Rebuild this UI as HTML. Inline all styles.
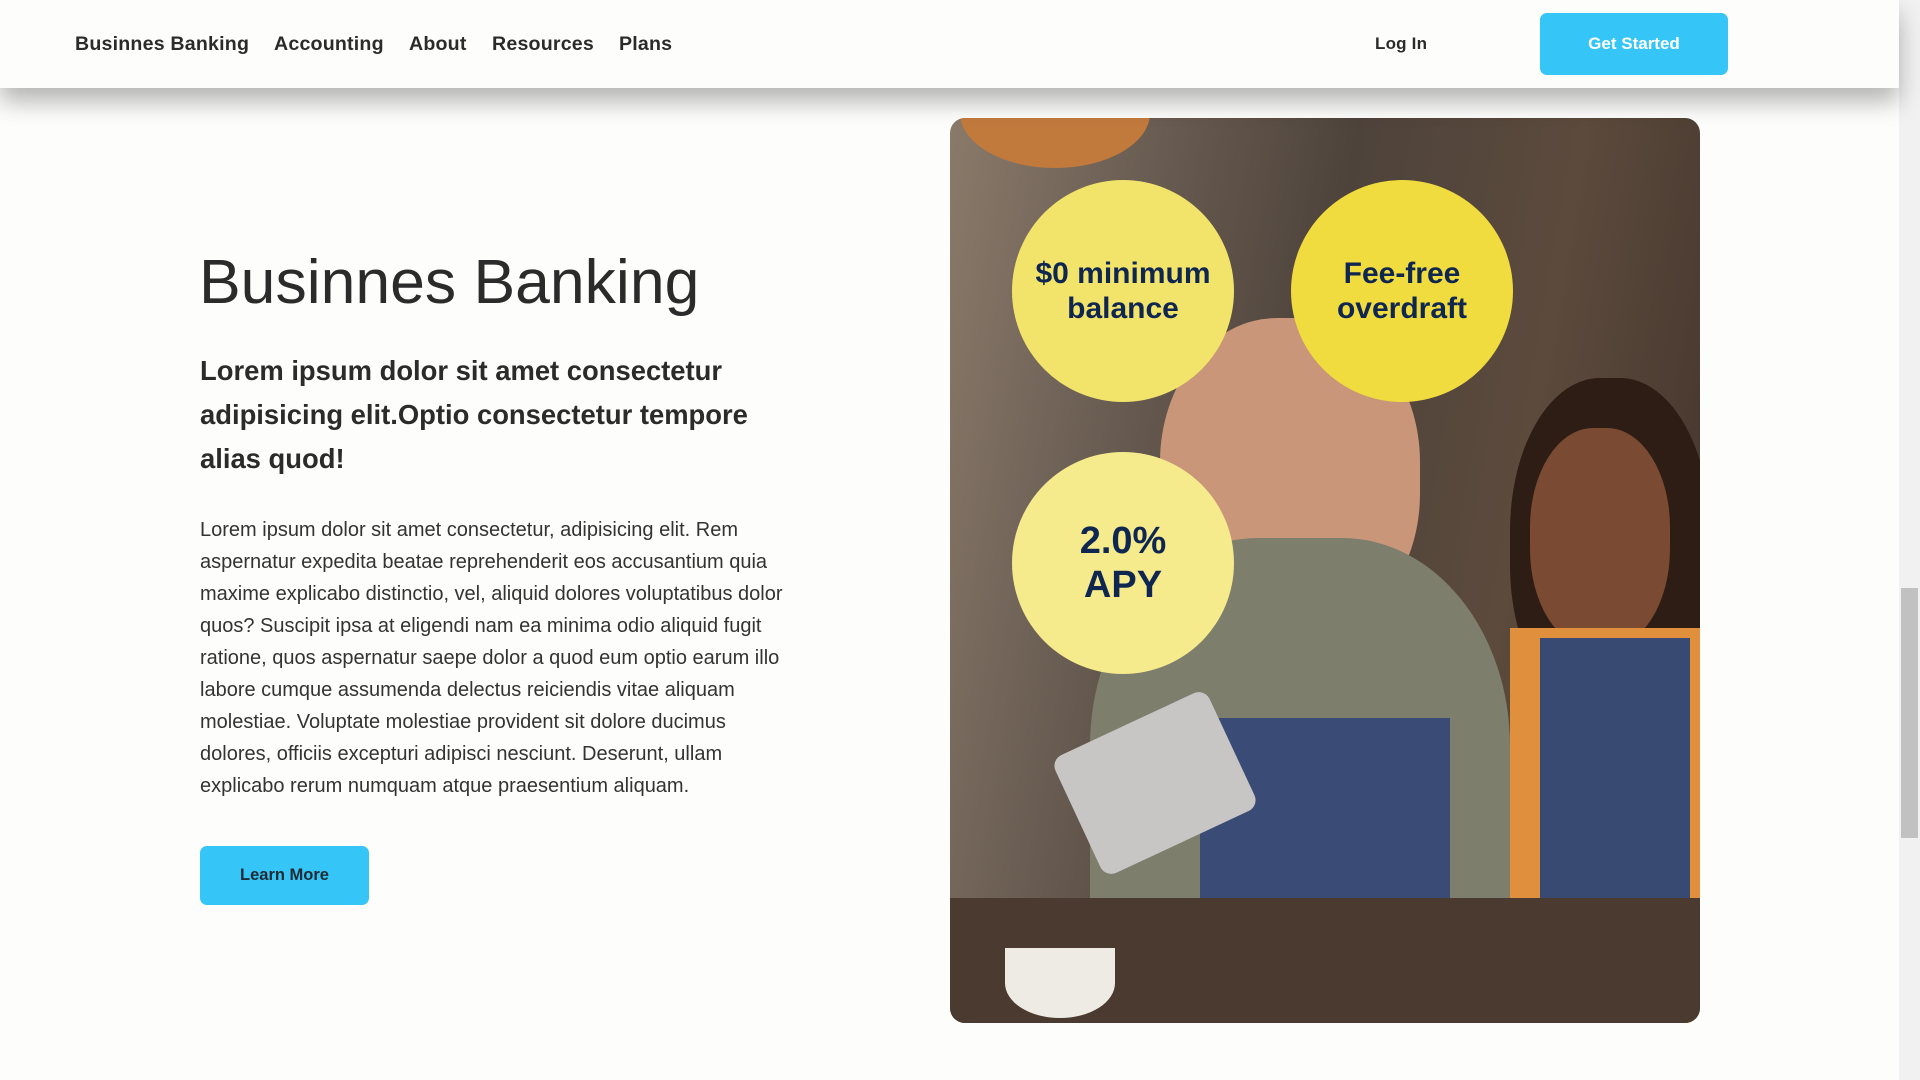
<!DOCTYPE html>
<html><head><meta charset="utf-8"><style>
*{margin:0;padding:0;box-sizing:border-box}
html,body{width:1920px;height:1080px;overflow:hidden;background:#fdfdfb;font-family:"Liberation Sans",Arial,sans-serif;color:#2b2b2b}
.nav{position:absolute;left:0;top:0;width:1899px;height:88px;background:#fdfdfb;box-shadow:0 14px 22px rgba(0,0,0,.28);z-index:2}
.nav a{position:absolute;top:33px;font-size:19.6px;font-weight:bold;color:#2b2b2b;text-decoration:none;letter-spacing:.2px}
.gs{position:absolute;left:1540px;top:13px;width:188px;height:62px;background:#35c5f7;border-radius:7px;color:#fff;font-weight:bold;font-size:17px;text-align:center;line-height:62px}
.sb{position:absolute;right:0;top:0;width:21px;height:1080px;background:#f1f1f1}
.thumb{position:absolute;right:2px;top:588px;width:17px;height:250px;background:#c1c1c1}
h1{position:absolute;left:199px;top:246px;font-size:62.5px;font-weight:normal;color:#2b2b2b}
h2{position:absolute;left:200px;top:349px;width:610px;font-size:27.4px;line-height:44px;font-weight:bold}
p{position:absolute;left:200px;top:514px;width:590px;font-size:20px;line-height:32px;color:#333}
.lm{position:absolute;left:200px;top:846px;width:169px;height:59px;background:#35c5f7;border-radius:7px;font-weight:bold;font-size:16.5px;text-align:center;line-height:59px;color:#1f2a33}
.img{position:absolute;left:950px;top:118px;width:750px;height:905px;border-radius:15px;overflow:hidden;
background:linear-gradient(100deg,#8a7a6a 0%,#6d6055 20%,#4e433b 45%,#5c4a3c 70%,#3e3029 100%)}
.c{position:absolute;width:222px;height:222px;border-radius:50%;background:#f2e46a;color:#0f2650;font-weight:bold;text-align:center;display:flex;align-items:center;justify-content:center;font-size:30px;line-height:35px;font-family:"Liberation Sans",sans-serif}
</style></head><body>
<div class="nav">
<a style="left:75px">Businnes Banking</a>
<a style="left:274px">Accounting</a>
<a style="left:409px">About</a>
<a style="left:492px">Resources</a>
<a style="left:619px">Plans</a>
<a style="left:1375px;font-size:17px;top:34px">Log In</a>
<div class="gs">Get Started</div>
</div>
<h1>Businnes Banking</h1>
<h2>Lorem ipsum dolor sit amet consectetur adipisicing elit.Optio consectetur tempore alias quod!</h2>
<p>Lorem ipsum dolor sit amet consectetur, adipisicing elit. Rem aspernatur expedita beatae reprehenderit eos accusantium quia maxime explicabo distinctio, vel, aliquid dolores voluptatibus dolor quos? Suscipit ipsa at eligendi nam ea minima odio aliquid fugit ratione, quos aspernatur saepe dolor a quod eum optio earum illo labore cumque assumenda delectus reiciendis vitae aliquam molestiae. Voluptate molestiae provident sit dolore ducimus dolores, officiis excepturi adipisci nesciunt. Deserunt, ullam explicabo rerum numquam atque praesentium aliquam.</p>
<div class="lm">Learn More</div>
<div class="img">
<div style="position:absolute;left:10px;top:-60px;width:190px;height:110px;border-radius:50%;background:#c27a3c"></div>
<div style="position:absolute;left:210px;top:200px;width:260px;height:320px;border-radius:45%;background:#c9967a"></div>
<div style="position:absolute;left:140px;top:420px;width:420px;height:520px;border-radius:40% 40% 0 0;background:#7d7e6c"></div>
<div style="position:absolute;left:250px;top:600px;width:250px;height:320px;background:#3a4c75"></div>
<div style="position:absolute;left:560px;top:260px;width:200px;height:340px;border-radius:45%;background:#2e1d15"></div>
<div style="position:absolute;left:580px;top:310px;width:140px;height:220px;border-radius:45%;background:#7a4a32"></div>
<div style="position:absolute;left:560px;top:510px;width:200px;height:400px;background:#e08f3c"></div>
<div style="position:absolute;left:590px;top:520px;width:150px;height:380px;background:#384a72"></div>
<div style="position:absolute;left:120px;top:600px;width:170px;height:130px;background:#c7c6c4;transform:rotate(-25deg);border-radius:12px"></div>
<div style="position:absolute;left:0;top:780px;width:750px;height:125px;background:#4a3a30"></div>
<div style="position:absolute;left:55px;top:830px;width:110px;height:70px;border-radius:0 0 50% 50%;background:#eeeae4"></div>
<div class="c" style="left:62px;top:62px">$0 minimum<br>balance</div>
<div class="c" style="left:341px;top:62px;background:#f0dc3e">Fee-free<br>overdraft</div>
<div class="c" style="left:62px;top:334px;background:#f5ea8c;font-size:38px;line-height:44px">2.0%<br>APY</div>
</div>
<div class="sb"><div class="thumb"></div></div>
</body></html>
